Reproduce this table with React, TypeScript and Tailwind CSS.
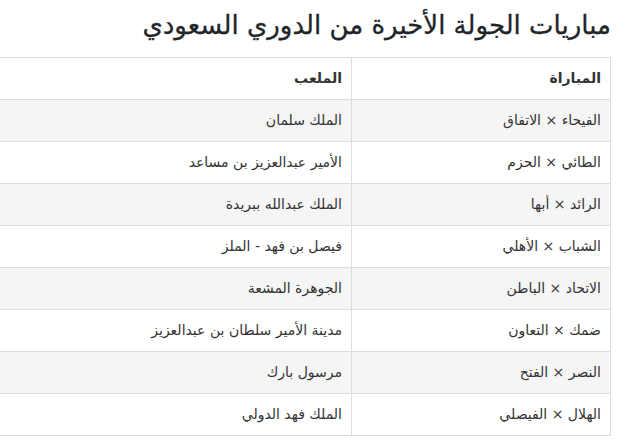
const rows: [string, string][] = [
  ["الفيحاء × الاتفاق", "الملك سلمان"],
  ["الطائي × الحزم", "الأمير عبدالعزيز بن مساعد"],
  ["الرائد × أبها", "الملك عبدالله ببريدة"],
  ["الشباب × الأهلي", "فيصل بن فهد - الملز"],
  ["الاتحاد × الباطن", "الجوهرة المشعة"],
  ["ضمك × التعاون", "مدينة الأمير سلطان بن عبدالعزيز"],
  ["النصر × الفتح", "مرسول بارك"],
  ["الهلال × الفيصلي", "الملك فهد الدولي"],
];

export default function App() {
  return (
    <div
      dir="rtl"
      className="w-[634px] h-[441px] overflow-hidden bg-white text-[#212529] pr-[23px] font-['DejaVu_Sans',sans-serif]"
    >
      {/* Title */}
      <h2 className="h-[57px] pt-[7px] text-[26px] font-normal leading-[36px] whitespace-nowrap [-webkit-text-stroke:0.3px_#212529]">
        مباريات الجولة الأخيرة من الدوري السعودي
      </h2>

      {/* Table */}
      <div className="flex justify-start">
        <table className="w-[800px] shrink-0 border-collapse text-[14px] text-[#333]">
          <thead>
            <tr className="h-[42px]">
              <th className="w-[259px] border border-[#ddd] px-[9px] text-right font-semibold">
                المباراة
              </th>
              <th className="border border-[#ddd] px-[9px] text-right font-semibold">
                الملعب
              </th>
            </tr>
          </thead>
          <tbody>
            {rows.map(([match, stadium], i) => (
              <tr key={i} className={i % 2 === 0 ? "h-[42px] bg-[#f5f5f5]" : "h-[42px] bg-white"}>
                <td className="border border-[#ddd] px-[9px] text-right">{match}</td>
                <td className="border border-[#ddd] px-[9px] text-right">{stadium}</td>
              </tr>
            ))}
          </tbody>
        </table>
      </div>
    </div>
  );
}
